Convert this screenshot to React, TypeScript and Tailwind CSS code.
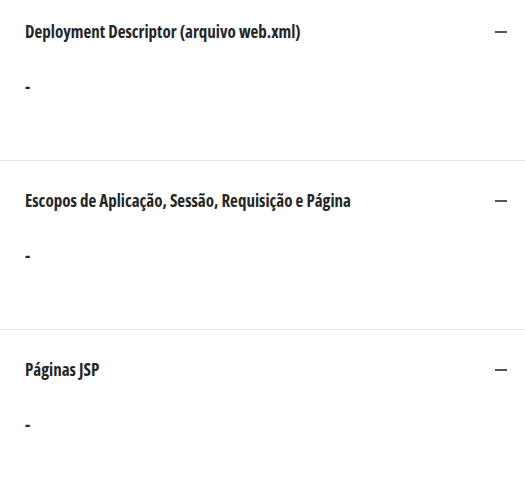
const sections = [
  "Deployment Descriptor (arquivo web.xml)",
  "Escopos de Aplicação, Sessão, Requisição e Página",
  "Páginas JSP",
];

export default function App() {
  return (
    <div className="w-[525px] bg-white" style={{ fontFamily: '"Open Sans", "Noto Sans", sans-serif' }}>
      {sections.map((title, i) => {
        const last = i === sections.length - 1;
        return (
          <div
            key={title}
            className={`px-[25px] ${i === 0 ? "pt-[20px]" : "pt-[28px]"} ${last ? "pb-[56px]" : "pb-[61px] border-b border-[#e3e3e3]"}`}
          >
            <div className="flex items-center justify-between h-[24px]">
              <h3 className="text-[17px] font-bold text-[#262626] leading-[24px] [font-stretch:condensed]">
                {title}
              </h3>
              <span className="block w-[12px] h-[2px] bg-[#555] mr-[-7px]" />
            </div>
            <p className="mt-[31px] text-[17px] font-bold text-[#262626] leading-[24px] [font-stretch:condensed]">-</p>
          </div>
        );
      })}
    </div>
  );
}
